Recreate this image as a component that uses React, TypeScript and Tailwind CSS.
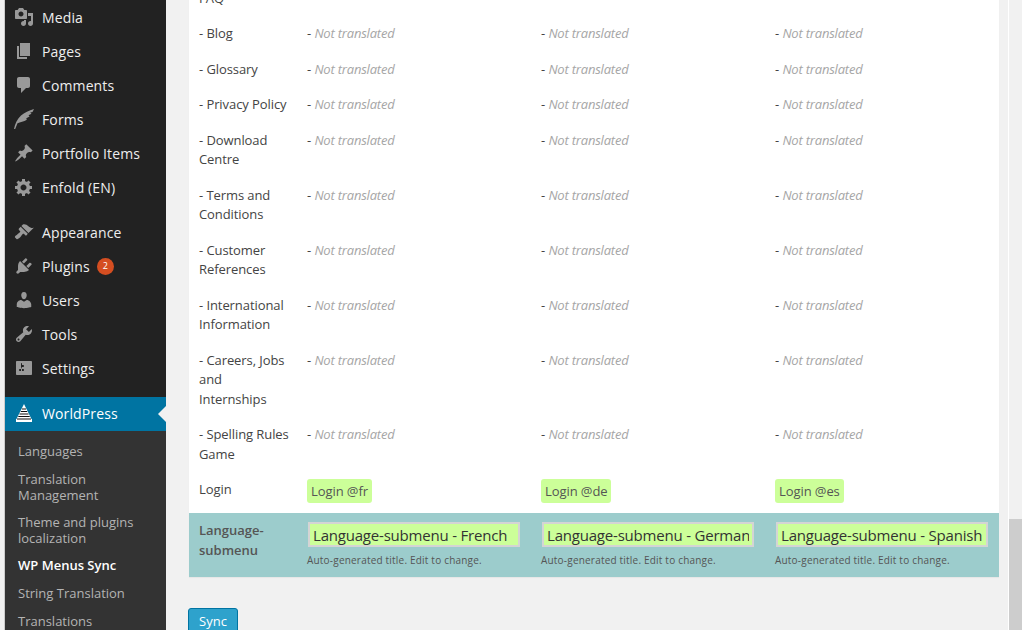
import type { ReactNode } from 'react';

const font = "font-['Open_Sans','Liberation_Sans',sans-serif]";

const Dash = ({ d, rule }: { d: string; rule?: 'evenodd' }) => (
  <svg viewBox="0 0 20 20" className="h-5 w-5 fill-current" aria-hidden="true">
    <path d={d} fillRule={rule} />
  </svg>
);

const icons: Record<string, ReactNode> = {
  media: <Dash d="M13 11V4c0-.55-.45-1-1-1h-1.67L9 1H5L3.67 3H2c-.55 0-1 .45-1 1v7c0 .55.45 1 1 1h10c.55 0 1-.45 1-1zM7 4.5c1.38 0 2.5 1.12 2.5 2.5S8.38 9.5 7 9.5 4.5 8.38 4.5 7 5.62 4.5 7 4.5zM14 6h5v10.5c0 1.38-1.12 2.5-2.5 2.5S14 17.88 14 16.5s1.12-2.5 2.5-2.5c.17 0 .34.02.5.05V9h-3V6zm-4 8.05V13h2v3.5c0 1.38-1.12 2.5-2.5 2.5S7 17.88 7 16.5 8.12 14 9.5 14c.17 0 .34.02.5.05z" />,
  pages: <Dash d="M6 15V2h10v13H6zm-1 1h8v2H3V5h2v11z" />,
  comments: <Dash d="M5 2h9c1.1 0 2 .9 2 2v7c0 1.1-.9 2-2 2h-2l-5 5v-5H5c-1.1 0-2-.9-2-2V4c0-1.1.9-2 2-2z" />,
  forms: <Dash d="M0 20C1 15 3 10 7 6.500C10.500 3.500 15 1.500 20 0L18.500 3L16.200 3.400L17.500 4.800L14.500 6.300L15.600 7.600L12.300 9.200L12.800 10.800C10 12.800 6 13 3.500 14.300L1.200 20Z" />,
  pin: <Dash d="M10.44 3.02l1.82-1.82 6.36 6.35-1.83 1.82c-1.05-.68-2.48-.57-3.41.36l-.75.75c-.92.93-1.04 2.35-.35 3.41l-1.83 1.82-2.41-2.41-2.8 2.79c-.42.42-3.38 2.71-3.8 2.29s1.86-3.39 2.28-3.81l2.79-2.79L4.1 9.36l1.83-1.82c1.05.69 2.48.57 3.4-.36l.75-.75c.93-.92 1.05-2.35.36-3.41z" />,
  gear: <Dash rule="evenodd" d="M18 12h-2.18c-.17.7-.44 1.35-.81 1.93l1.54 1.54-2.1 2.1-1.54-1.54c-.58.36-1.23.63-1.91.79V19H8v-2.18c-.68-.16-1.33-.43-1.91-.79l-1.54 1.54-2.12-2.12 1.54-1.54c-.36-.58-.63-1.23-.79-1.91H1V9.03h2.17c.16-.7.44-1.35.8-1.94L2.43 5.55l2.1-2.1 1.54 1.54c.58-.37 1.24-.64 1.93-.81V2h3v2.18c.68.16 1.33.43 1.91.79l1.54-1.54 2.12 2.12-1.54 1.54c.36.59.64 1.24.8 1.94H18V12zm-8.5 1.5c1.66 0 3-1.34 3-3s-1.34-3-3-3-3 1.34-3 3 1.34 3 3 3z" />,
  brush: <Dash d="M14.48 11.06L7.41 3.99l1.5-1.5c.5-.56 2.3-.47 3.51.32 1.21.8 1.43 1.28 2.91 2.1 1.18.64 2.45 1.26 4.45.85zm-.71.71L6.7 4.7 4.93 6.47c-.39.39-.39 1.02 0 1.41l1.06 1.06c.39.39.39 1.03 0 1.42-.6.6-1.43 1.11-2.21 1.69-.35.26-.7.53-1.01.84C1.43 13.23.4 14.91 1.08 15.59l1.41 1.41c.68.68 2.36-.35 3.7-1.69.31-.31.58-.66.84-1.01.58-.78 1.09-1.61 1.69-2.21.39-.39 1.03-.39 1.42 0l1.06 1.06c.39.39 1.02.39 1.41 0z" />,
  plugin: <Dash d="M13.11 4.36L9.87 7.6 8 5.73l3.24-3.24c.35-.34 1.05-.2 1.56.32.52.51.66 1.21.31 1.55zm-8 1.77l.91-1.12 9.01 9.01-1.19.84c-.71.71-2.63 1.16-3.82 1.16H6.14L4.9 17.26c-.59.59-1.54.59-2.12 0-.59-.58-.59-1.53 0-2.12l1.24-1.24v-3.88c0-1.13.4-3.19 1.09-3.89zm7.26 3.97l3.24-3.24c.34-.35 1.04-.21 1.55.31.52.51.66 1.21.31 1.55l-3.24 3.25z" />,
  users: <Dash d="M10 9.25c-2.27 0-2.73-3.44-2.73-3.44C7 4.02 7.82 2 9.97 2c2.16 0 2.98 2.02 2.71 3.81 0 0-.41 3.44-2.68 3.44zm0 2.57L12.72 10c2.39 0 4.52 2.33 4.52 4.53v2.49s-3.65 1.13-7.24 1.13c-3.65 0-7.24-1.13-7.24-1.13v-2.49c0-2.25 1.94-4.48 4.47-4.48z" />,
  tools: <Dash rule="evenodd" d="M16.68 9.77c-1.34 1.34-3.3 1.67-4.95.99l-5.41 6.52c-.99.99-2.59.99-3.58 0s-.99-2.59 0-3.57l6.52-5.42c-.68-1.65-.35-3.61.99-4.95 1.28-1.28 3.12-1.62 4.72-1.06l-2.89 2.89 2.82 2.82 2.86-2.87c.53 1.58.18 3.39-1.08 4.65zM3.81 16.21c.4.39 1.04.39 1.43 0 .4-.4.4-1.04 0-1.43-.39-.4-1.03-.4-1.43 0-.39.39-.39 1.03 0 1.43z" />,
  settings: <Dash rule="evenodd" d="M18 16V4c0-.55-.45-1-1-1H3c-.55 0-1 .45-1 1v12c0 .55.45 1 1 1h14c.55 0 1-.45 1-1zM8 11h1c.55 0 1 .45 1 1s-.45 1-1 1H8v1.5c0 .28-.22.5-.5.5s-.5-.22-.5-.5V13H6c-.55 0-1-.45-1-1s.45-1 1-1h1V5.5c0-.28.22-.5.5-.5s.5.22.5.5V7h1c.55 0 1 .45 1 1s-.45 1-1 1h-1v5.5c0 .28-.22.5-.5.5s-.5-.22-.5-.5V9z" />,
};

const MenuItem = ({ icon, label, badge }: { icon: string; label: string; badge?: string }) => (
  <div className="flex h-[34px] items-center">
    <span className="flex w-[37px] justify-center pl-[1px] text-[#999]">{icons[icon]}</span>
    <span className="text-[14px] tracking-[0.12px] text-[#eee]">{label}</span>
    {badge && (
      <span className="ml-[7px] flex h-[17px] w-[17px] items-center justify-center rounded-full bg-[#d54e21] text-[9px] text-white">
        {badge}
      </span>
    )}
  </div>
);

const Sidebar = () => (
  <aside className="w-[161px] shrink-0 bg-[#222]">
    {[
      ['media', 'Media'],
      ['pages', 'Pages'],
      ['comments', 'Comments'],
      ['forms', 'Forms'],
      ['pin', 'Portfolio Items'],
      ['gear', 'Enfold (EN)'],
    ].map(([icon, label]) => (
      <MenuItem key={label} icon={icon} label={label} />
    ))}
    <div className="h-[11px]" />
    <MenuItem icon="brush" label="Appearance" />
    <MenuItem icon="plugin" label="Plugins" badge="2" />
    <MenuItem icon="users" label="Users" />
    <MenuItem icon="tools" label="Tools" />
    <MenuItem icon="settings" label="Settings" />
    <div className="h-[12px]" />
    <div className="relative flex h-[34px] items-center bg-[#0074a2] pb-[2px]">
      <span className="flex w-[37px] justify-center pl-[1px]">
        <svg viewBox="0 0 16 18" className="h-[18px] w-4" aria-hidden="true">
          <path d="M8 0 15.500 15H16V18H0V15H.5z" fill="#fff" />
          <path d="M6 4.500h4v1H6zM4.800 7h6.400v1H4.800zM3.500 9.500h9v1h-9zM2.300 12h11.400v1H2.300zM1 14.500h14v1H1z" fill="#111" />
        </svg>
      </span>
      <span className="text-[14px] tracking-[0.12px] text-white">WorldPress</span>
      <span className="absolute right-0 top-[9px] h-0 w-0 border-y-[8px] border-r-[8px] border-y-transparent border-r-[#f1f1f1]" />
    </div>
    <div className="bg-[#333] pt-[12px] pl-[13px] text-[13px] leading-[16px] text-[#b4b4b4]">
      <div className="pb-[12px]">Languages</div>
      <div className="pb-[11px]">Translation<br />Management</div>
      <div className="pb-[11px]">Theme and plugins<br />localization</div>
      <div className="pb-[12px] font-semibold text-white">WP Menus Sync</div>
      <div className="pb-[12px]">String Translation</div>
      <div className="pb-[12px]">Translations</div>
    </div>
  </aside>
);

const langs = ['fr', 'de', 'es'];

const Row = ({ label }: { label: ReactNode }) => (
  <div className="flex items-start text-[13px] leading-[19.5px] tracking-[-0.08px] text-[#444]">
    <div className="w-[118px] shrink-0 py-2 pl-[10px] pr-[18px]">{label}</div>
    {langs.map((l) => (
      <div key={l} className="w-[234px] shrink-0 py-2">
        - <span className="italic tracking-[-0.2px] text-[#a6a6a6]">Not translated</span>
      </div>
    ))}
  </div>
);

const Table = () => (
  <div className="w-[810px] bg-white shadow-[0_1px_1px_rgba(0,0,0,0.04)]">
    {[
      'FAQ',
      '- Blog',
      '- Glossary',
      '- Privacy Policy',
      '- Download Centre',
      '- Terms and Conditions',
      '- Customer References',
      '- International Information',
      '- Careers, Jobs and Internships',
      '- Spelling Rules Game',
    ].map((label, i) =>
      i === 0 ? (
        <div key={label} className="py-2 pl-[10px] text-[13px] leading-[19.5px] text-[#444]">{label}</div>
      ) : (
        <Row key={label} label={label} />
      ),
    )}
    <div className="flex h-[41px] items-start text-[13px] leading-[19.5px] tracking-[-0.08px] text-[#444]">
      <div className="w-[118px] shrink-0 py-2 pl-[10px]">Login</div>
      {['Login @fr', 'Login @de', 'Login @es'].map((t) => (
        <div key={t} className="w-[234px] shrink-0 pt-[7px]">
          <span className="inline-block h-6 rounded-[3px] bg-[#ccff99] px-1 leading-6 text-[#555]">{t}</span>
        </div>
      ))}
    </div>
    <div className="flex h-[64px] items-start bg-[#9ccccc] text-[13px] leading-[19.5px]">
      <div className="w-[118px] shrink-0 py-2 pl-[10px] font-semibold text-[#555]">Language-<br />submenu</div>
      {['French', 'German', 'Spanish'].map((l) => (
        <div key={l} className="w-[234px] shrink-0 pt-[9px]">
          <input
            readOnly
            value={`Language-submenu - ${l}`}
            className="ml-px block h-[25px] w-[212px] border-2 border-[#d4d4d4] bg-[#ccff99] px-[3px] text-[15px] tracking-[-0.2px] text-[#333] outline-none"
          />
          <p className="mt-[6px] text-[10px] leading-[15px] tracking-[0.2px] text-[#555]">Auto-generated title. Edit to change.</p>
        </div>
      ))}
    </div>
  </div>
);

export default function App() {
  return (
    <div className={`${font} flex h-[630px] w-[1022px] overflow-hidden bg-[#f1f1f1]`}>
      <div className="w-[5px] shrink-0 border-r border-[#ccc] bg-[#f1f1f1]" />
      <Sidebar />
      <main className="min-w-0 flex-1 pl-[23px]">
        <div className="-mt-[19.5px]">
          <Table />
          <button className="-ml-px mt-[31px] h-[28px] w-[50px] rounded-[3px] border border-[#0074a2] bg-[#2ea2cc] text-[13px] text-white">
            Sync
          </button>
        </div>
      </main>
      <div className="flex w-[14px] shrink-0 flex-col border-l border-white bg-[#f1f1f1]">
        <div className="h-[519px]" />
        <div className="flex-1 bg-[#cdcdcd]" />
      </div>
    </div>
  );
}
